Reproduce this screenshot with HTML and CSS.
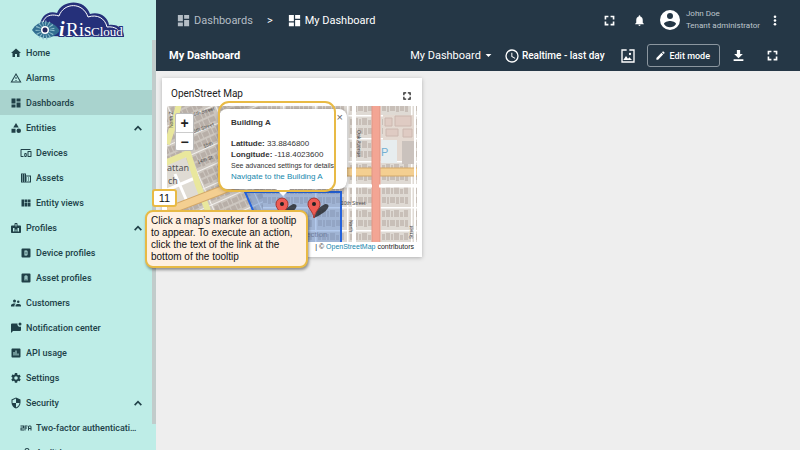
FILE: index.html
```html
<!DOCTYPE html>
<html lang="en">
<head>
<meta charset="utf-8">
<meta name="viewport" content="width=device-width, initial-scale=1">
<title>My Dashboard</title>
<link rel="stylesheet" href="styles.css">
</head>
<body>
<svg class="defs" aria-hidden="true">
  <symbol id="i-dash" viewBox="0 0 24 24"><path d="M3 13h8V3H3v10zm0 8h8v-6H3v6zm10 0h8V11h-8v10zm0-18v6h8V3h-8z"/></symbol>
  <symbol id="i-home" viewBox="0 0 24 24"><path d="M10 20v-6h4v6h5v-8h3L12 3 2 12h3v8z"/></symbol>
  <symbol id="i-alarm" viewBox="0 0 24 24"><path d="M12 6l7.500 13h-15L12 6m0-4L1 21h22L12 2zm1 14h-2v2h2v-2zm0-6h-2v4h2v-4z"/></symbol>
  <symbol id="i-entities" viewBox="0 0 24 24"><path d="M12 2l-5.500 9h11zM3 13.500h8v8H3z"/><circle cx="17.500" cy="17.500" r="4.500"/></symbol>
  <symbol id="i-devices" viewBox="0 0 24 24"><path d="M3 6h18V4H3c-1.100 0-2 .9-2 2v12c0 1.100.9 2 2 2h4v-2H3V6zm10 6H9v1.800c-.6.500-1 1.300-1 2.200s.4 1.700 1 2.200V20h4v-1.800c.6-.5 1-1.300 1-2.200s-.4-1.700-1-2.200V12zm-2 5.500c-.8 0-1.500-.7-1.500-1.500s.7-1.500 1.500-1.500 1.500.7 1.500 1.500-.7 1.500-1.500 1.500zM22 8h-6c-.5 0-1 .5-1 1v10c0 .5.5 1 1 1h6c.5 0 1-.5 1-1V9c0-.5-.5-1-1-1zm-1 10h-4v-8h4v8z"/></symbol>
  <symbol id="i-assets" viewBox="0 0 24 24"><path d="M12 7V3H2v18h20V7H12zM6 19H4v-2h2v2zm0-4H4v-2h2v2zm0-4H4V9h2v2zm0-4H4V5h2v2zm4 12H8v-2h2v2zm0-4H8v-2h2v2zm0-4H8V9h2v2zm0-4H8V5h2v2zm10 12h-8v-2h2v-2h-2v-2h2v-2h-2V9h8v10zm-2-8h-2v2h2v-2zm0 4h-2v2h2v-2z"/></symbol>
  <symbol id="i-views" viewBox="0 0 24 24"><path d="M3 5h5v14H3zM9 5h5v6H9zM15 5h6v6h-6zM9 12h5v7H9zM15 12h6v7h-6z"/></symbol>
  <symbol id="i-badge" viewBox="0 0 24 24"><path fill-rule="evenodd" d="M20 7h-5V4c0-1.100-.9-2-2-2h-2c-1.100 0-2 .9-2 2v3H4c-1.100 0-2 .9-2 2v11c0 1.100.9 2 2 2h16c1.100 0 2-.9 2-2V9c0-1.100-.9-2-2-2zM11 4h2v5h-2zM6 12h3v7H6zm5 3h2v4h-2zm4-3h3v7h-3z"/></symbol>
  <symbol id="i-d" viewBox="0 0 24 24"><path fill-rule="evenodd" d="M5 3h14a2 2 0 012 2v14a2 2 0 01-2 2H5a2 2 0 01-2-2V5a2 2 0 012-2zm4 4v10h4a2 2 0 002-2V9a2 2 0 00-2-2zm2 2h2v6h-2z"/></symbol>
  <symbol id="i-a" viewBox="0 0 24 24"><path fill-rule="evenodd" d="M5 3h14a2 2 0 012 2v14a2 2 0 01-2 2H5a2 2 0 01-2-2V5a2 2 0 012-2zm6 4a2 2 0 00-2 2v8h2v-4h2v4h2V9a2 2 0 00-2-2zm0 2h2v2h-2z"/></symbol>
  <symbol id="i-people" viewBox="0 0 24 24"><path d="M16.500 12a2.500 2.500 0 100-5 2.500 2.500 0 000 5zM9 11a3 3 0 100-6 3 3 0 000 6zm7.500 3c-1.830 0-5.500.92-5.500 2.750V19h11v-2.250c0-1.830-3.670-2.750-5.500-2.750zM9 13c-2.330 0-7 1.170-7 3.500V19h7v-2.250c0-.85.330-2.340 2.370-3.470C10.500 13.100 9.660 13 9 13z"/></symbol>
  <symbol id="i-note" viewBox="0 0 24 24"><path d="M15 3H4a2 2 0 00-2 2v17l4-4h14a2 2 0 002-2V9a5 5 0 01-7-6z"/><circle cx="20" cy="4" r="3"/></symbol>
  <symbol id="i-api" viewBox="0 0 24 24"><path d="M19 3H5c-1.100 0-2 .9-2 2v14c0 1.100.9 2 2 2h14c1.100 0 2-.9 2-2V5c0-1.100-.9-2-2-2zM9 17H7v-7h2v7zm4 0h-2V7h2v10zm4 0h-2v-4h2v4z"/></symbol>
  <symbol id="i-gear" viewBox="0 0 24 24"><path d="M19.140 12.940a7 7 0 000-1.880l2.030-1.580a.5.500 0 00.12-.61l-1.920-3.320a.5.500 0 00-.59-.22l-2.390.96a7 7 0 00-1.620-.94l-.36-2.540A.5.500 0 0013.930 2h-3.840a.5.500 0 00-.48.410l-.36 2.540a7 7 0 00-1.620.94l-2.390-.96a.5.500 0 00-.59.220L2.740 8.870a.5.500 0 00.12.610l2.030 1.580a7 7 0 000 1.880l-2.030 1.580a.5.500 0 00-.12.610l1.920 3.320c.12.220.370.290.59.220l2.390-.96c.5.380 1.030.7 1.620.94l.36 2.540c.05.240.24.410.48.410h3.840c.24 0 .44-.17.470-.41l.36-2.540a7 7 0 001.620-.94l2.390.96c.22.080.470 0 .59-.22l1.920-3.320a.5.500 0 00-.12-.61zM12 15.600a3.600 3.600 0 110-7.200 3.600 3.600 0 010 7.200z"/></symbol>
  <symbol id="i-shield" viewBox="0 0 24 24"><path d="M12 1L3 5v6c0 5.550 3.840 10.740 9 12 5.160-1.260 9-6.450 9-12V5l-9-4zm0 10.990h7c-.53 4.120-3.280 7.790-7 8.940V12H5V6.300l7-3.110v8.800z"/></symbol>
  <symbol id="i-2fa" viewBox="0 0 24 24"><path d="M1 7h7v6H3v2h5v2H1v-6h5V9H1zM9 7h6v2h-4v2h3v2h-3v4H9zM16 9l2-2h3l2 2v8h-2v-3h-3v3h-2zm2 0v3h3V9z"/></symbol>
  <symbol id="i-audit" viewBox="0 0 24 24"><path d="M14 2a5 5 0 00-5 5c0 3-4 5-5 10a4 4 0 007 3l-2-1c-1 1-3 1-3-1 0-4 5-7 5-11a3 3 0 016 0h2a5 5 0 00-5-5z"/></symbol>
  <symbol id="i-up" viewBox="0 0 24 24"><path d="M4 17l8-8 8 8" fill="none" stroke="currentColor" stroke-width="4"/></symbol>
  <symbol id="i-full" viewBox="0 0 24 24"><path d="M3 3h7v3H6v4H3zM14 3h7v7h-3V6h-4zM3 14h3v4h4v3H3zM18 14h3v7h-7v-3h4z"/></symbol>
  <symbol id="i-bell" viewBox="0 0 24 24"><path d="M12 22c1.100 0 2-.9 2-2h-4c0 1.100.9 2 2 2zm6-6v-5c0-3.070-1.640-5.640-4.500-6.320V4a1.500 1.500 0 00-3 0v.68C7.630 5.360 6 7.920 6 11v5l-2 2v1h16v-1l-2-2z"/></symbol>
  <symbol id="i-user" viewBox="0 0 24 24"><path d="M12 2a10 10 0 100 20 10 10 0 000-20zm0 3a3 3 0 110 6 3 3 0 010-6zm0 14.200a7.200 7.200 0 01-6-3.220c.03-1.990 4-3.080 6-3.080s5.970 1.090 6 3.080a7.200 7.200 0 01-6 3.220z"/></symbol>
  <symbol id="i-more" viewBox="0 0 24 24"><circle cx="12" cy="4.500" r="2.600"/><circle cx="12" cy="12" r="2.600"/><circle cx="12" cy="19.500" r="2.600"/></symbol>
  <symbol id="i-clock" viewBox="0 0 24 24"><path d="M12 2a10 10 0 100 20 10 10 0 000-20zm0 18a8 8 0 110-16 8 8 0 010 16zm.5-13H11v6l5.250 3.150.75-1.230-4.500-2.670z"/></symbol>
  <symbol id="i-image" viewBox="0 0 24 24"><path d="M2 2h8v2H4v16h16V4h-6V2h8v20H2z"/><path d="M5 18l4-6 3 4 2-2 4 4z"/><circle cx="15" cy="9" r="1.700"/></symbol>
  <symbol id="i-pen" viewBox="0 0 24 24"><path d="M3 17.250V21h3.750L17.810 9.940l-3.750-3.750L3 17.250zM20.710 7.040a1 1 0 000-1.410l-2.340-2.340a1 1 0 00-1.410 0l-1.830 1.830 3.750 3.750 1.830-1.830z"/></symbol>
  <symbol id="i-down" viewBox="0 0 24 24"><path d="M20 9h-5V2H9v7H4l8 8zM3 19v3h18v-3z"/></symbol>
  <symbol id="i-caret" viewBox="0 0 24 24"><path d="M2 7h20L12 17z"/></symbol>
</svg>

<div class="app">
  <aside class="sidebar">
    <a class="logo" href="#" aria-label="iRis Cloud">
      <svg viewBox="0 0 96 39">
        <path d="M10 35C4 22 12 8 25 12C31 -2 53 -2 58 13C66 10 76 15 77 24C86 23 92 28 92 36Z" fill="#25307a"/>
        <path d="M12 30C8 20 14 11 27 15C32 1 51 1 56 16C65 13 73 17 75 26C83 25 88 29 90 35" fill="none" stroke="#fff" stroke-width="1"/>
        <path d="M0 29C7 18 20 18 28 30C19 40 7 39 0 29Z" fill="#326f91"/>
        <circle cx="13" cy="29" r="7" fill="none" stroke="#8dbccb" stroke-width="5" stroke-dasharray="1 2"/>
        <circle cx="13" cy="29" r="4" fill="#fff"/><circle cx="13" cy="29" r="2.500" fill="#24285e"/>
        <text class="logo-i" x="27" y="35">i</text>
        <text class="logo-ris" x="34" y="35">Ris</text>
        <text class="logo-cloud" x="59" y="35">Cloud</text>
      </svg>
    </a>
    <nav>
      <a href="#"><svg><use href="#i-home"/></svg><span>Home</span></a>
      <a href="#"><svg><use href="#i-alarm"/></svg><span>Alarms</span></a>
      <a href="#" class="active"><svg><use href="#i-dash"/></svg><span>Dashboards</span></a>
      <a href="#"><svg><use href="#i-entities"/></svg><span>Entities</span><svg class="chev"><use href="#i-up"/></svg></a>
      <a href="#" class="sub"><svg><use href="#i-devices"/></svg><span>Devices</span></a>
      <a href="#" class="sub"><svg><use href="#i-assets"/></svg><span>Assets</span></a>
      <a href="#" class="sub"><svg><use href="#i-views"/></svg><span>Entity views</span></a>
      <a href="#"><svg><use href="#i-badge"/></svg><span>Profiles</span><svg class="chev"><use href="#i-up"/></svg></a>
      <a href="#" class="sub"><svg><use href="#i-d"/></svg><span>Device profiles</span></a>
      <a href="#" class="sub"><svg><use href="#i-a"/></svg><span>Asset profiles</span></a>
      <a href="#"><svg><use href="#i-people"/></svg><span>Customers</span></a>
      <a href="#"><svg><use href="#i-note"/></svg><span>Notification center</span></a>
      <a href="#"><svg><use href="#i-api"/></svg><span>API usage</span></a>
      <a href="#"><svg><use href="#i-gear"/></svg><span>Settings</span></a>
      <a href="#"><svg><use href="#i-shield"/></svg><span>Security</span><svg class="chev"><use href="#i-up"/></svg></a>
      <a href="#" class="sub"><svg><use href="#i-2fa"/></svg><span>Two-factor authentication</span></a>
      <a href="#" class="sub"><svg><use href="#i-audit"/></svg><span>Audit log</span></a>
    </nav>
    <div class="scrollbar"></div>
  </aside>

  <div class="content">
    <header>
      <div class="topbar">
        <div class="crumbs">
          <a href="#" class="muted"><svg><use href="#i-dash"/></svg>Dashboards</a>
          <span class="sep">&gt;</span>
          <a href="#"><svg><use href="#i-dash"/></svg>My Dashboard</a>
        </div>
        <div class="account">
          <button class="fullscreen" aria-label="Fullscreen"><svg><use href="#i-full"/></svg></button>
          <button aria-label="Notifications"><svg><use href="#i-bell"/></svg></button>
          <div class="user"><svg><use href="#i-user"/></svg><div><div>John Doe</div><div class="role">Tenant administrator</div></div></div>
          <button aria-label="More"><svg><use href="#i-more"/></svg></button>
        </div>
      </div>
      <div class="toolbar">
        <h1>My Dashboard</h1>
        <div class="tools">
          <button class="state">My Dashboard<svg class="caret"><use href="#i-caret"/></svg></button>
          <button class="time"><svg><use href="#i-clock"/></svg>Realtime - last day</button>
          <button class="image" aria-label="Dashboard image"><svg><use href="#i-image"/></svg></button>
          <button class="edit"><svg><use href="#i-pen"/></svg>Edit mode</button>
          <button class="download" aria-label="Download"><svg><use href="#i-down"/></svg></button>
          <button aria-label="Expand"><svg><use href="#i-full"/></svg></button>
        </div>
      </div>
    </header>

    <main>
      <section class="widget">
        <div class="widget-head"><h2>OpenStreet Map</h2><button aria-label="Expand widget"><svg><use href="#i-full"/></svg></button></div>
        <div class="map">
          <svg class="tiles" viewBox="0 0 250 136" preserveAspectRatio="xMinYMin slice">
            <defs>
              <pattern id="blocks" width="32" height="23" patternUnits="userSpaceOnUse" x="212" y="9">
                <path d="M0 0h32v23H0z" fill="#dfdad4"/>
                <path d="M3 4h3v6H3zM7 3h4v7H7zM12 4h2v6h-2zM15 3h5v7h-5zM21 5h3v5h-3zM25 3h4v7h-4zM3 13h4v6H3zM8 13h2v7H8zM11 13h5v6h-5zM17 13h3v7h-3zM21 13h4v6h-4zM26 13h3v7h-3z" fill="#c8bfb8"/>
                <path d="M0 0h32M0 0v23" stroke="#fff" stroke-width="3"/>
              </pattern>
              <pattern id="slant" width="44" height="18" patternUnits="userSpaceOnUse" patternTransform="rotate(-24)">
                <path d="M0 0h44v18H0z" fill="#cdc7c0"/>
                <path d="M2 3h4v5H2zM7 2h3v6H7zM11 3h5v5h-5zM17 2h3v6h-3zM21 3h6v5h-6zM28 2h3v6h-3zM32 3h3v5h-3zM36 2h4v6h-4zM2 10h5v5H2zM8 10h3v6H8zM12 10h4v5h-4zM17 10h5v6h-5zM23 10h3v5h-3zM27 10h5v6h-5zM33 10h6v5h-6z" fill="#b8afa8"/>
                <path d="M0 0h44M0 0v18" stroke="#f2f0ed" stroke-width="2"/>
              </pattern>
            </defs>
            <path d="M0 0h250v136H0z" fill="url(#blocks)"/>
            <path d="M0 0h96v136H0z" fill="url(#slant)"/>
            <path d="M0 54l17-7 17 43-34 14z" fill="#dfdbd3"/>
            <path d="M40 88l48-20M0 84l28-12M8 68l14 32" stroke="#fff" stroke-width="3" fill="none"/>
            <path d="M12 -2L8 14L0 38M-2 57L21 47L31 79L43 110" stroke="#e9e79d" stroke-width="6" fill="none"/>
            <path d="M-2 106L55 84L95 66H250" stroke="#d3a869" stroke-width="9" fill="none"/>
            <path d="M-2 106L55 84L95 66H250" stroke="#f4cf91" stroke-width="7" fill="none"/>
            <path d="M216 9h31v46h-31z" fill="#e4d9d1"/>
            <path d="M218 12h7v8h-7zM228 10h16v10h-16zM219 23h12v7h-12zM236 23h9v8h-9z" fill="#dfcbc3" stroke="#ccb8b0" stroke-width="1"/>
            <path d="M214 34h16v23h-16z" fill="#e7edef"/><path d="M235 35h13v23h-13z" fill="#cac2bd"/>
            <path d="M187 0v136" stroke="#fff" stroke-width="4"/><path d="M248 0v136" stroke="#fff" stroke-width="2"/>
            <path d="M209 0v136" stroke="#e09584" stroke-width="9"/><path d="M209 0v136" stroke="#f3a594" stroke-width="7"/>
            <path d="M212 80h38M173 80h32" stroke="#fff" stroke-width="3"/>
            <path d="M78 86H174V139H101z" fill="#4a80d4" fill-opacity=".42" stroke="#2463dc" stroke-width="2"/>
            <g class="map-labels">
              <text transform="translate(6 22) rotate(-90)">North Z</text>
              <text transform="translate(27 10) rotate(-16)">6th Street</text>
              <text transform="translate(27 27) rotate(-20)">5th Street</text>
              <text transform="translate(37 42) rotate(-20)">15th</text>
              <text transform="translate(31 58) rotate(-20)">14th St</text>
              <text x="174" y="99">10th Street</text>
              <text transform="translate(190 24) rotate(90)">Oak Avenue</text>
              <text transform="translate(182 114) rotate(90)">North</text>
              <text transform="translate(246 133) rotate(-90)">Street</text>
            </g>
            <text class="place" x="0" y="65">attan</text><text class="place" x="1" y="78">ch</text>
            <text class="section" x="139" y="131">ection</text><text class="parking" x="214" y="50">P</text>
            <g id="marker-a"><path d="M115 112l3-9 8-5q5 0 3 4-3 5-14 10z" fill="#1a1a1a" opacity=".75"/><path d="M115 112C114 105 109 103 109 98a6 6 0 0112 0c0 5-5 7-6 14z" fill="#ee5c54" stroke="#a7352f" stroke-width="1"/><circle cx="115" cy="98" r="2"/></g>
            <use href="#marker-a" x="32"/>
          </svg>
          <div class="zoomer"><button aria-label="Zoom in">+</button><button aria-label="Zoom out">−</button></div>
          <div class="popup">
            <button aria-label="Close">×</button>
            <strong>Building A</strong>
            <p><b>Latitude:</b> 33.8846800<br><b>Longitude:</b> -118.4023600</p>
            <small>See advanced settings for details</small>
            <a href="#">Navigate to the Building A</a>
          </div>
          <div class="outline"></div>
        </div>
        <div class="credit">| © <a href="#">OpenStreetMap</a> contributors</div>
        <div class="step">11</div>
        <div class="callout">Click a map’s marker for a tooltip to appear. To execute an action, click the text of the link at the bottom of the tooltip</div>
      </section>
    </main>
  </div>
</div>
</body>
</html>
```
FILE: styles.css
```css
* { box-sizing: border-box; }
body { margin: 0; font-family: Roboto, "Liberation Sans", sans-serif; background: #eee; color: #222; }
.defs { position: absolute; width: 0; height: 0; }
svg { fill: currentColor; flex: none; }
a { color: inherit; text-decoration: none; }
button { border: 0; padding: 0; margin: 0; background: none; color: inherit; font: inherit; display: flex; align-items: center; cursor: pointer; }
h1, h2, p { margin: 0; }

.app { display: grid; grid-template-columns: 156px minmax(0, 1fr); height: 100vh; overflow: hidden; }

.sidebar { position: relative; background: #beede7; overflow: hidden; color: #204148; }
.logo { display: block; height: 40px; padding: 1px 0 0 32px; }
.logo svg { display: block; width: 96px; height: 39px; overflow: visible; }
.logo text { font-family: "Liberation Serif", serif; fill: #fff; stroke: #25307a; stroke-width: 2px; paint-order: stroke; }
.logo-i { font-size: 20px; font-style: italic; font-weight: bold; }
.logo-ris { font-size: 19px; }
.logo-cloud { font-size: 13px; }
nav a { display: flex; align-items: center; gap: 4px; height: 25px; padding: 0 13px 0 10px; font-size: 9px; font-weight: 500; }
nav a.sub { padding: 0 17px 0 20px; }
nav svg { width: 12px; height: 12px; }
nav span { flex: 1; min-width: 0; overflow: hidden; text-overflow: ellipsis; white-space: nowrap; }
nav .active { background: #a9d3ce; }
nav svg.chev { width: 10px; height: 10px; }
.scrollbar { position: absolute; top: 40px; right: 0; bottom: 26px; width: 4px; background: #c1cccb; }

.content { min-width: 0; }
header { background: #253746; color: #fff; height: 71px; }
.topbar { display: flex; justify-content: space-between; align-items: center; height: 40px; padding: 0 19px 0 20px; }
.crumbs, .crumbs a, .account, .user, .tools { display: flex; align-items: center; }
.crumbs { font-size: 11px; gap: 14px; }
.crumbs a { gap: 3px; }
.crumbs svg { width: 15px; height: 15px; }
.muted { color: #b4bdc5; }
.account { gap: 12px; }
.account svg { width: 13px; height: 13px; }
.account .fullscreen { margin-right: 5px; }
.account button:last-child { margin-left: -3px; }
.account button:last-child svg { width: 12px; }
.user { gap: 4px; font-size: 8px; line-height: 12px; color: #bec6cc; }
.account .user svg { width: 24px; height: 24px; color: #fff; }
.toolbar { display: flex; justify-content: space-between; align-items: center; height: 31px; padding: 0 21px 0 13px; }
h1 { font-size: 11px; font-weight: 700; }
.tools { font-size: 10px; font-weight: 500; }
.tools svg { width: 13px; height: 13px; }
.state { gap: 4px; font-size: 11px; font-weight: 400; }
.tools .caret { width: 7px; height: 7px; }
.time { gap: 2px; margin-left: 12px; }
.tools .time svg, .tools .image svg { width: 16px; height: 16px; }
.image { margin-left: 15px; }
.edit { gap: 4px; height: 23px; padding: 0 9px 0 7px; margin-left: 11px; border: 1px solid #8b969f; border-radius: 3px; font-size: 9px; }
.tools .edit svg { width: 11px; height: 11px; }
.download { margin: 0 21px 0 12px; }

main { padding: 7px 6px; }
.widget { position: relative; width: 260px; height: 179px; padding: 0 5px; background: #fff; box-shadow: 0 1px 4px #0004; }
.widget-head { display: flex; align-items: center; justify-content: space-between; height: 28px; padding: 2px 5px 0 4px; }
h2 { font-size: 10px; font-weight: 400; }
.widget-head svg { width: 10px; height: 10px; margin-top: 5px; }
.map { position: relative; height: 136px; font-family: "Liberation Sans", sans-serif; }
.tiles { display: block; width: 100%; height: 100%; overflow: hidden; }
.map-labels { font-size: 5px; fill: #444; }
.place { font-size: 9px; fill: #555; font-family: "Noto Sans", sans-serif; }
.section { font-size: 8px; fill: #7180a0; }
.parking { font-size: 11px; fill: #72afd2; }
.zoomer { position: absolute; left: 8px; top: 7px; width: 19px; background: #fff; border: 1px solid #bbb; border-radius: 2px; }
.zoomer button { width: 100%; height: 18px; justify-content: center; font-size: 14px; font-weight: 700; }
.zoomer button + button { border-top: 1px solid #ccc; }
.popup { position: absolute; left: 52px; top: 3px; width: 128px; height: 80px; padding: 8px 0 0 12px; background: #fff; border-radius: 8px; box-shadow: 0 1px 5px #0006; font-size: 8px; line-height: 11px; color: #333; }
.popup::after { content: ""; position: absolute; left: 57px; top: 100%; border: 7px solid transparent; border-top-color: #fff; border-bottom: 0; }
.popup button { position: absolute; right: 4px; top: 3px; font-size: 11px; line-height: 11px; color: #666; }
.popup strong, .popup small, .popup a { display: block; }
.popup p { margin-top: 10px; }
.popup small { font-size: 7px; line-height: 11px; white-space: nowrap; }
.popup a, .credit a { color: #1687ad; }
.outline { position: absolute; left: 51px; top: -5px; width: 118px; height: 91px; border: 2px solid #e8ba45; border-radius: 11px; }
.credit { text-align: right; padding-right: 3px; font: 7px/10px "Liberation Sans", sans-serif; }
.step, .callout { position: absolute; border: 2px solid #e8ba45; font-family: "Liberation Sans", sans-serif; color: #111; }
.step { left: -10px; top: 111px; width: 25px; height: 18px; background: #fff; border-radius: 3px; font-size: 11px; line-height: 14px; text-align: center; }
.callout { left: -17px; top: 132px; width: 163px; height: 58px; padding: 3px 0 0 4px; background: #fff0e1; border-radius: 8px; box-shadow: 1px 2px 3px #0006; font-size: 10px; line-height: 12px; }
```
